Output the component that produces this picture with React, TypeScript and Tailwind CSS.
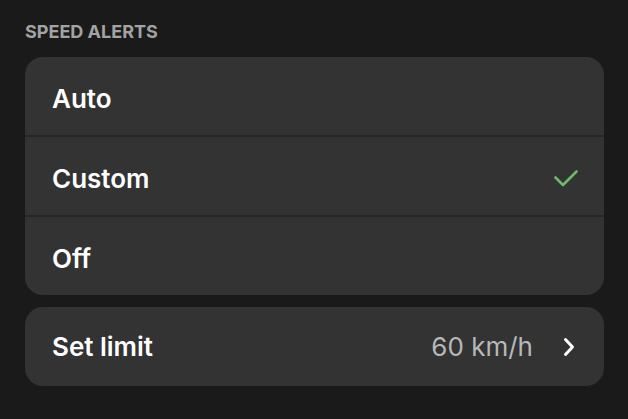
import React from "react";

const options = [
  { label: "Auto", selected: false },
  { label: "Custom", selected: true },
  { label: "Off", selected: false },
];

const Check: React.FC = () => (
  <svg width="26" height="20" viewBox="0 0 26 20" fill="none">
    <path d="M2.5 9.5 L10 17 L23.5 3.5" stroke="#6dba6a" strokeWidth="2.6" strokeLinecap="round" strokeLinejoin="round" />
  </svg>
);

const Chevron: React.FC = () => (
  <svg width="14" height="20" viewBox="0 0 14 20" fill="none">
    <path d="M3.5 2.5 L10.5 10 L3.5 17.5" stroke="#ffffff" strokeWidth="3" strokeLinecap="round" strokeLinejoin="round" />
  </svg>
);

export default function App() {
  return (
    <div className="w-[628px] h-[419px] bg-[#1a1a1a] pl-[25px] pr-[24px] pt-[22px] font-['Inter',sans-serif] overflow-hidden">
      <div className="text-[18px] font-bold text-[#a3a3a3] leading-5">SPEED ALERTS</div>

      <div className="mt-[15px] rounded-[18px] bg-[#333333] overflow-hidden">
        {options.map((o, i) => (
          <div key={o.label}>
            {i > 0 && <div className="h-[2px] bg-[#262626]" />}
            <div className="h-[78px] flex items-center justify-between pl-[27px] pr-[25px] pt-[4px]">
              <span className="text-[26px] font-semibold text-white">{o.label}</span>
              {o.selected && <Check />}
            </div>
          </div>
        ))}
      </div>

      <div className="mt-[12px] h-[79px] rounded-[18px] bg-[#333333] flex items-center justify-between pl-[27px] pr-[28px]">
        <span className="text-[26px] font-semibold text-white">Set limit</span>
        <div className="flex items-center gap-[29px]">
          <span className="text-[26px] text-[#b8b8b8]">60 km/h</span>
          <Chevron />
        </div>
      </div>
    </div>
  );
}
